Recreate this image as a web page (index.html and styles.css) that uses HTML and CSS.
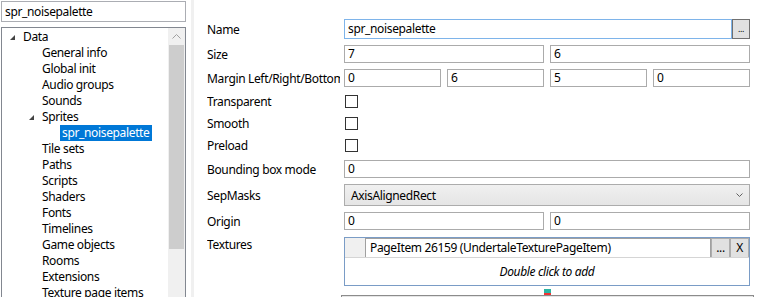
FILE: index.html
```html
<!DOCTYPE html>
<html>
<head>
    <title>Sprite editor</title>
    <link rel="stylesheet" href="styles.css">
</head>
<body>
    <div class="window">
        <div class="left">
            <div class="search">spr_noisepalette</div>
            <div class="tree">
                <div class="tree-items">
                    <div class="node lv0"><span class="toggle"><svg width="5" height="5" viewBox="0 0 5 5"><polygon points="5,0 5,5 0,5" fill="#444"/></svg></span><span class="label">Data</span></div>
                    <div class="node lv1"><span class="toggle"></span><span class="label">General info</span></div>
                    <div class="node lv1"><span class="toggle"></span><span class="label">Global init</span></div>
                    <div class="node lv1"><span class="toggle"></span><span class="label">Audio groups</span></div>
                    <div class="node lv1"><span class="toggle"></span><span class="label">Sounds</span></div>
                    <div class="node lv1"><span class="toggle"><svg width="5" height="5" viewBox="0 0 5 5"><polygon points="5,0 5,5 0,5" fill="#444"/></svg></span><span class="label">Sprites</span></div>
                    <div class="node lv2"><span class="toggle"></span><span class="label selected">spr_noisepalette</span></div>
                    <div class="node lv1"><span class="toggle"></span><span class="label">Tile sets</span></div>
                    <div class="node lv1"><span class="toggle"></span><span class="label">Paths</span></div>
                    <div class="node lv1"><span class="toggle"></span><span class="label">Scripts</span></div>
                    <div class="node lv1"><span class="toggle"></span><span class="label">Shaders</span></div>
                    <div class="node lv1"><span class="toggle"></span><span class="label">Fonts</span></div>
                    <div class="node lv1"><span class="toggle"></span><span class="label">Timelines</span></div>
                    <div class="node lv1"><span class="toggle"></span><span class="label">Game objects</span></div>
                    <div class="node lv1"><span class="toggle"></span><span class="label">Rooms</span></div>
                    <div class="node lv1"><span class="toggle"></span><span class="label">Extensions</span></div>
                    <div class="node lv1"><span class="toggle"></span><span class="label">Texture page items</span></div>
                </div>
                <div class="scrollbar">
                    <div class="sb-up"><svg width="9" height="5" viewBox="0 0 9 5"><polyline points="0.5,4.5 4.5,0.5 8.5,4.5" fill="none" stroke="#a0a0a0" stroke-width="1"/></svg></div>
                    <div class="sb-thumb"></div>
                </div>
            </div>
        </div>

        <div class="splitter"></div>

        <div class="right">
            <div class="row row-name">
                <div class="field-label">Name</div>
                <div class="field">
                    <div class="input focused">spr_noisepalette</div>
                    <div class="btn-more">...</div>
                </div>
            </div>
            <div class="row row-24">
                <div class="field-label">Size</div>
                <div class="field grid2">
                    <div class="input">7</div>
                    <div class="input">6</div>
                </div>
            </div>
            <div class="row row-24">
                <div class="field-label">Margin Left/Right/Bottom</div>
                <div class="field grid4">
                    <div class="input">0</div>
                    <div class="input">6</div>
                    <div class="input">5</div>
                    <div class="input">0</div>
                </div>
            </div>
            <div class="row row-check-a">
                <div class="field-label">Transparent</div>
                <div class="field"><div class="checkbox"></div></div>
            </div>
            <div class="row row-check-b">
                <div class="field-label">Smooth</div>
                <div class="field"><div class="checkbox"></div></div>
            </div>
            <div class="row row-check-a">
                <div class="field-label">Preload</div>
                <div class="field"><div class="checkbox"></div></div>
            </div>
            <div class="row row-24">
                <div class="field-label">Bounding box mode</div>
                <div class="field"><div class="input">0</div></div>
            </div>
            <div class="row row-28">
                <div class="field-label">SepMasks</div>
                <div class="field">
                    <div class="dropdown">
                        <span>AxisAlignedRect</span>
                        <svg width="7" height="4" viewBox="0 0 7 4"><polyline points="0.5,0.5 3.5,3.5 6.5,0.5" fill="none" stroke="#606060" stroke-width="1"/></svg>
                    </div>
                </div>
            </div>
            <div class="row row-24">
                <div class="field-label">Origin</div>
                <div class="field grid2">
                    <div class="input">0</div>
                    <div class="input">0</div>
                </div>
            </div>
            <div class="row row-textures">
                <div class="field-label">Textures</div>
                <div class="field">
                    <div class="texture-list">
                        <div class="texture-row">
                            <div class="row-header"></div>
                            <div class="texture-cell">PageItem 26159 (UndertaleTexturePageItem)</div>
                            <div class="cell-btn">...</div>
                            <div class="cell-btn">X</div>
                        </div>
                        <div class="add-hint">Double click to add</div>
                    </div>
                </div>
            </div>
            <div class="below">
                <div class="mini-icon"></div>
                <div class="bottom-bar"></div>
            </div>
        </div>
    </div>
</body>
</html>
```

FILE: styles.css
```css
body {
    margin: 0;
    background: #fff;
    font-family: "Noto Sans", "Segoe UI", sans-serif;
    font-size: 12px;
    letter-spacing: -0.35px;
    color: #000;
    overflow: hidden;
}
.window { display: flex; height: 297px; overflow: hidden; }

/* left pane */
.left { width: 185px; flex: none; margin-left: 1px; padding-top: 1px; }
.search {
    height: 19px;
    border: 1px solid #abadb3;
    padding-left: 3px;
    line-height: 19px;
    white-space: nowrap;
}
.tree {
    margin-top: 5px;
    height: 275px;
    border: 1px solid #828790;
    display: flex;
    overflow: hidden;
}
.tree-items { flex: 1; padding-top: 1px; }
.node { display: flex; align-items: center; height: 16px; white-space: nowrap; }
.lv0 { padding-left: 6px; }
.lv1 { padding-left: 25px; }
.lv2 { padding-left: 45px; }
.toggle { width: 13px; height: 16px; display: flex; align-items: center; padding-left: 2px; box-sizing: border-box; }
.label { padding: 0 2px; line-height: 16px; }
.selected { background: #0078d7; color: #fff; }
.scrollbar { width: 17px; background: #f0f0f0; }
.sb-up { height: 17px; display: flex; align-items: center; justify-content: center; }
.sb-thumb { margin-left: 1px; width: 15px; height: 204px; background: #cdcdcd; }

.splitter { width: 3px; flex: none; margin-left: 5px; background: #f0f0f0; }

/* right pane */
.right { padding-left: 13px; padding-top: 16px; width: 543px; flex: none; }
.row { display: flex; align-items: center; }
.row-name { height: 26px; }
.row-24 { height: 24px; }
.row-28 { height: 28px; }
.row-check-a { height: 23px; }
.row-check-b { height: 21px; }
.row-textures { align-items: flex-start; margin-top: 4px; }
.field-label { width: 133px; margin-right: 4px; flex: none; overflow: hidden; white-space: nowrap; }
.row-textures .field-label { margin-top: -1px; }
.field { width: 406px; flex: none; display: flex; }
.grid2 { display: grid; grid-template-columns: 1fr 1fr; gap: 6px; }
.grid4 { display: grid; grid-template-columns: repeat(4, 1fr); gap: 6px; }

.input {
    flex: 1;
    height: 18px;
    border: 1px solid #ababab;
    box-sizing: border-box;
    padding-left: 3px;
    line-height: 16px;
    white-space: nowrap;
}
.input.focused { height: 20px; border-color: #7eb4ea; line-height: 18px; }
.btn-more {
    width: 18px;
    height: 20px;
    box-sizing: border-box;
    border: 1px solid #707070;
    background: #e1e1e1;
    font-size: 9px;
    text-align: center;
    line-height: 18px;
}
.checkbox {
    width: 13px;
    height: 13px;
    margin-left: 1px;
    border: 1px solid #333;
    box-sizing: border-box;
}
.dropdown {
    flex: 1;
    height: 22px;
    box-sizing: border-box;
    border: 1px solid #acacac;
    background: linear-gradient(#f0f0f0, #e5e5e5);
    display: flex;
    align-items: center;
    justify-content: space-between;
    padding: 0 6px;
}
.texture-list {
    flex: 1;
    height: 49px;
    box-sizing: border-box;
    border: 1px solid #7a9cc6;
}
.texture-row {
    display: flex;
    height: 20px;
    border-bottom: 1px solid #d5d5d5;
    box-sizing: border-box;
}
.row-header { width: 20px; background: #f0f0f0; }
.texture-cell {
    flex: 1;
    border: 1px solid #a0a0a0;
    border-bottom: none;
    padding-left: 4px;
    line-height: 18px;
    white-space: nowrap;
}
.cell-btn {
    width: 17px;
    border: 1px solid #adadad;
    border-bottom: none;
    background: #e1e1e1;
    text-align: center;
    line-height: 18px;
}
.add-hint { text-align: center; font-style: italic; line-height: 27px; }
.below { position: relative; height: 12px; }
.mini-icon {
    position: absolute;
    left: 337px;
    top: 3px;
    width: 7px;
    height: 6px;
    background: #2bb3a3;
    border-bottom: 2px solid #e33;
    box-sizing: border-box;
}
.bottom-bar {
    position: absolute;
    left: 134px;
    top: 9px;
    width: 411px;
    height: 10px;
    border: 1px solid #8c8c8c;
    background: #e6e6e6;
}
```
